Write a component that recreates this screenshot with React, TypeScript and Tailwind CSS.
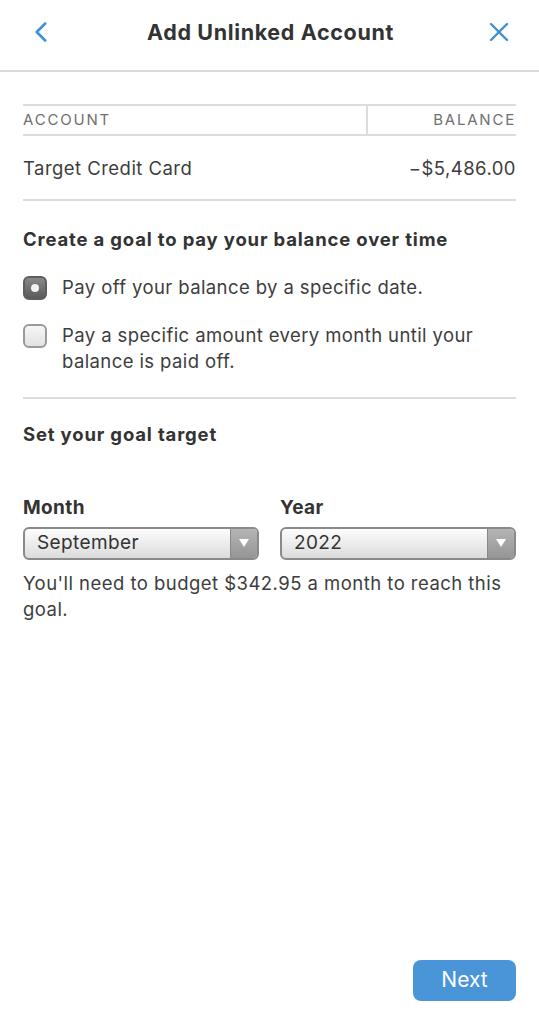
import { ChevronLeft, X } from "lucide-react";

function Select({ value }: { value: string }) {
  return (
    <div className="flex h-[38px] flex-1 overflow-hidden rounded-[6px] border-2 border-[#8a8a8a] bg-gradient-to-b from-[#fdfdfd] to-[#dcdcdc]">
      <div className="flex flex-1 items-center pl-3 text-[19px] tracking-[0.02em] text-[#333]">{value}</div>
      <div className="flex w-[27px] items-center justify-center border-l border-[#888] bg-gradient-to-b from-[#b5b5b5] to-[#959595]">
        <svg width="10" height="8" viewBox="0 0 10 8">
          <path d="M0 0 L10 0 L5 8 Z" fill="#fff" />
        </svg>
      </div>
    </div>
  );
}

function Check({ on }: { on?: boolean }) {
  return on ? (
    <div className="mt-[2px] flex h-[24px] w-[24px] shrink-0 items-center justify-center rounded-[6px] border-2 border-[#5e5e5e] bg-gradient-to-b from-[#8a8a8a] to-[#5a5a5a]">
      <div className="h-[8px] w-[8px] rounded-full bg-[#f2f2f2]" />
    </div>
  ) : (
    <div className="mt-[2px] h-[24px] w-[24px] shrink-0 rounded-[6px] border-2 border-[#9a9a9a] bg-gradient-to-b from-[#f6f6f6] to-[#e2e2e2]" />
  );
}

export default function App() {
  return (
    <div className="min-h-[1024px] w-[539px] bg-white font-['Inter',sans-serif] text-[#3d3d3d]">
      <header className="flex h-[72px] items-center justify-between border-b-2 border-[#dadada] px-[24px] pb-[6px]">
        <ChevronLeft className="h-[34px] w-[34px] text-[#3f8fd5]" strokeWidth={1.8} />
        <h1 className="text-[21.5px] font-bold tracking-[0.03em] text-[#333]">Add Unlinked Account</h1>
        <X className="h-[32px] w-[32px] text-[#3f8fd5]" strokeWidth={1.8} />
      </header>

      <div className="px-[23px] pt-[32px]">
        <div className="flex h-[32px] border-y-2 border-[#dcdcdc] text-[15px] tracking-[0.12em] text-[#707070]">
          <div className="flex flex-1 items-center border-r-2 border-[#dcdcdc]">ACCOUNT</div>
          <div className="flex w-[148px] items-center justify-end">BALANCE</div>
        </div>
        <div className="flex h-[65px] items-center justify-between border-b-2 border-[#dcdcdc] pt-[3px] text-[18.5px] tracking-[0.025em]">
          <span>Target Credit Card</span>
          <span>−$5,486.00</span>
        </div>

        <div className="border-b-2 border-[#dcdcdc] pb-[23px] pt-[25px] tracking-[0.025em]">
          <h2 className="text-[18.5px] font-bold tracking-[0.045em] text-[#333]">Create a goal to pay your balance over time</h2>
          <div className="mt-[20px] flex gap-[15px] text-[18.5px] leading-[26px]">
            <Check on />
            <span>Pay off your balance by a specific date.</span>
          </div>
          <div className="mt-[22px] flex gap-[15px] text-[18.5px] leading-[26px]">
            <Check />
            <span>Pay a specific amount every month until your balance is paid off.</span>
          </div>
        </div>

        <h2 className="pt-[22px] text-[18.5px] font-bold tracking-[0.045em] text-[#333]">Set your goal target</h2>

        <div className="mt-[45px] flex gap-[21px]">
          <div className="flex flex-1 flex-col gap-[5px]">
            <span className="text-[19px] font-bold tracking-[0.02em] text-[#333]">Month</span>
            <Select value="September" />
          </div>
          <div className="flex flex-1 flex-col gap-[5px]">
            <span className="text-[19px] font-bold tracking-[0.02em] text-[#333]">Year</span>
            <Select value="2022" />
          </div>
        </div>
        <p className="mt-[10px] text-[18.5px] leading-[26px] tracking-[0.025em]">You'll need to budget $342.95 a month to reach this goal.</p>

        <div className="mt-[338px] flex justify-end">
          <button className="h-[41px] w-[103px] rounded-[8px] bg-[#4a94d8] text-[21px] text-white">Next</button>
        </div>
      </div>
    </div>
  );
}
